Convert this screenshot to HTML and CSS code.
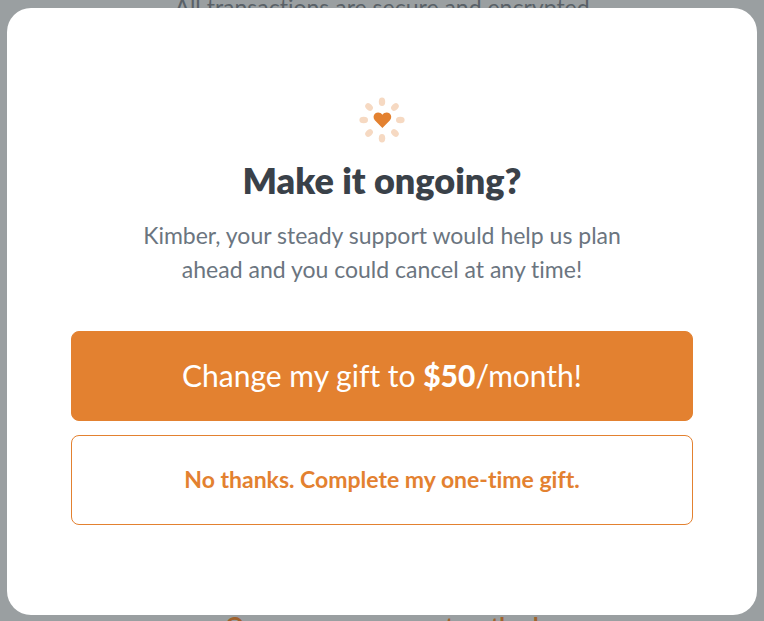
FILE: index.html
```html
<!DOCTYPE html>
<html lang="en">
<head>
    <meta charset="UTF-8">
    <meta name="viewport" content="width=device-width, initial-scale=1.0">
    <title>Make it ongoing?</title>
    <link rel="stylesheet" href="styles.css">
</head>
<body>
    <main class="checkout">
        <p class="secure-note">All transactions are secure and encrypted</p>
        <a class="payment-link" href="#">Or use a new payment method</a>
    </main>

    <div class="overlay">
        <div class="modal" role="dialog" aria-modal="true" aria-labelledby="modalTitle">
            <svg class="modal-icon" viewBox="0 0 46 46" aria-hidden="true">
                <g class="rays">
                    <ellipse cx="23" cy="4.7" rx="3.2" ry="4.3"/>
                    <ellipse cx="23" cy="4.7" rx="3.2" ry="4.3" transform="rotate(45 23 23)"/>
                    <ellipse cx="23" cy="4.7" rx="3.2" ry="4.3" transform="rotate(90 23 23)"/>
                    <ellipse cx="23" cy="4.7" rx="3.2" ry="4.3" transform="rotate(135 23 23)"/>
                    <ellipse cx="23" cy="4.7" rx="3.2" ry="4.3" transform="rotate(180 23 23)"/>
                    <ellipse cx="23" cy="4.7" rx="3.2" ry="4.3" transform="rotate(225 23 23)"/>
                    <ellipse cx="23" cy="4.7" rx="3.2" ry="4.3" transform="rotate(270 23 23)"/>
                    <ellipse cx="23" cy="4.7" rx="3.2" ry="4.3" transform="rotate(315 23 23)"/>
                </g>
                <path class="heart" d="M23.4 31 L15.8 23.2 C14 21.2 14.2 18.2 16.1 16.6 C18.4 14.9 21.6 15.4 23.4 17.8 C25.2 15.4 28.4 14.9 30.7 16.6 C32.6 18.2 32.8 21.2 31 23.2 Z"/>
            </svg>
            <h1 id="modalTitle">Make it ongoing?</h1>
            <p class="message">Kimber, your steady support would help us plan ahead and you could cancel at any time!</p>
            <button type="button" class="btn btn-primary">Change my gift to <strong>$50</strong>/month!</button>
            <button type="button" class="btn btn-secondary">No thanks. Complete my one-time gift.</button>
        </div>
    </div>
</body>
</html>
```

FILE: styles.css
```css
* {
    box-sizing: border-box;
}
body {
    margin: 0;
    font-family: Lato, sans-serif;
    font-variant-ligatures: none;
    background-color: #9a9fa1;
}
.checkout {
    display: flex;
    flex-direction: column;
    align-items: center;
    justify-content: space-between;
    height: 100vh;
    overflow: hidden;
    font-size: 23px;
    line-height: 28px;
}
.secure-note {
    margin: -7px 0 0;
    color: #596167;
}
.payment-link {
    margin-bottom: -18px;
    color: #a0622d;
    font-weight: bold;
    text-decoration: none;
}
.overlay {
    position: fixed;
    inset: 0;
    display: flex;
    padding: 8px 7px 6px;
}
.modal {
    display: flex;
    flex-direction: column;
    align-items: center;
    width: 100%;
    padding: 89px 64px 64px;
    border-radius: 24px;
    background: #fff;
    text-align: center;
}
.modal-icon {
    width: 46px;
    height: 46px;
}
.rays {
    fill: #f6d9c2;
}
.heart {
    fill: #e38130;
}
h1 {
    margin: 15px 0 0;
    color: #3a4149;
    font-size: 36px;
    font-weight: 800;
    line-height: 44px;
}
.message {
    max-width: 500px;
    margin: 16px 0 45px;
    color: #6b7580;
    font-size: 23px;
    line-height: 34px;
}
.btn {
    width: 100%;
    padding: 19px 20px 21px;
    border: 1px solid #e38130;
    border-radius: 8px;
    font-family: inherit;
    font-variant-ligatures: inherit;
    line-height: 48px;
    cursor: pointer;
}
.btn-primary {
    margin-bottom: 14px;
    background: #e38130;
    color: #fff;
    font-size: 30px;
}
.btn-primary strong {
    font-weight: 900;
}
.btn-secondary {
    background: #fff;
    color: #e38130;
    font-size: 23px;
    font-weight: bold;
}
```
